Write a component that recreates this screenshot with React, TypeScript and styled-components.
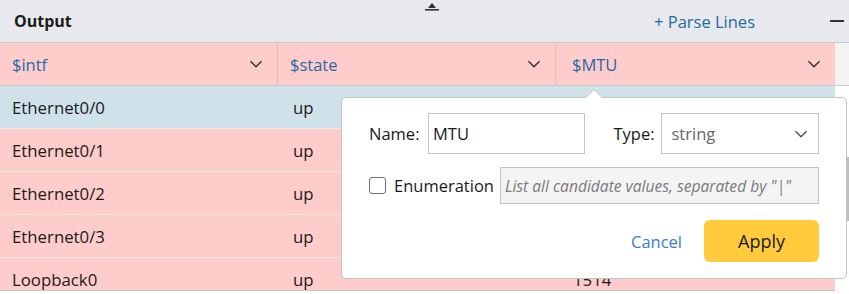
import React from "react";
import styled, { createGlobalStyle } from "styled-components";

const GlobalStyle = createGlobalStyle`
  html, body {
    margin: 0;
    padding: 0;
    background: #ffffff;
    font-family: "Open Sans", "Noto Sans", sans-serif;
  }
`;

const Panel = styled.div`
  width: 849px;
  height: 294px;
  overflow: hidden;
  position: relative;
  background: #ffffff;
`;

const TopBar = styled.div`
  height: 42px;
  display: flex;
  align-items: center;
  padding: 0 4px 0 14px;
  background: #e8e9ec;
  border-bottom: 1px solid #c9c9c9;
  position: relative;
`;

const Title = styled.div`
  font-weight: 700;
  font-size: 16px;
  color: #1b1b1b;
  flex: 1;
`;

const ParseLink = styled.span`
  font-size: 16.5px;
  color: #1f6aa5;
  margin-right: 75px;
`;

const Grip = styled.div`
  position: absolute;
  left: 423px;
  top: 2px;
  width: 18px;
  display: flex;
  flex-direction: column;
  align-items: center;
`;

const MinusIcon = styled.div`
  width: 14px;
  height: 2px;
  background: #333;
  margin-right: 1px;
`;

const TableArea = styled.div`
  display: flex;
  position: relative;
`;

const Table = styled.div`
  width: 835px;
`;

const Body = styled.div`
  height: 204px;
  overflow: hidden;
  border-bottom: 1px solid #c9c9c9;
`;

const Gutter = styled.div`
  flex: 1;
  background: #ffffff;
  display: flex;
  flex-direction: column;
`;

const GutterHead = styled.div`
  height: 42px;
  background: #f4f4f4;
  border-bottom: 1px solid #c9c9c9;
`;

const Row = styled.div<{ $bg: string; $head?: boolean }>`
  display: grid;
  grid-template-columns: 278px 278px 279px;
  height: 42px;
  flex-shrink: 0;
  background: ${({ $bg }) => $bg};
  border-bottom: 1px solid ${({ $head }) => ($head ? "#c9c9c9" : "#f3e8e8")};
`;

const HeadCell = styled.div`
  display: flex;
  align-items: center;
  justify-content: space-between;
  padding: 0 14px 0 12px;
  font-size: 16.5px;
  color: #1f6aa5;
  border-right: 1px solid #e4b9b9;
  &:last-child {
    border-right: none;
    padding-left: 16px;
  }
`;

const Cell = styled.div`
  display: flex;
  align-items: center;
  padding: 0 12px;
  font-size: 16.8px;
  color: #1a1a1a;
  &:nth-child(2) {
    padding-left: 15px;
  }
  &:nth-child(3) {
    padding-left: 17px;
  }
`;

const Popover = styled.div`
  position: absolute;
  left: 341px;
  top: 54px;
  width: 506px;
  height: 182px;
  box-sizing: border-box;
  background: #ffffff;
  border: 1px solid #c4c4c4;
  border-radius: 5px;
  padding: 15px 27px 0 27px;
  display: flex;
  flex-direction: column;
`;

const Arrow = styled.div`
  position: absolute;
  left: 243px;
  top: -9px;
  width: 0;
  height: 0;
  border-left: 9px solid transparent;
  border-right: 9px solid transparent;
  border-bottom: 9px solid #c4c4c4;
  &::after {
    content: "";
    position: absolute;
    left: -8px;
    top: 1px;
    border-left: 8px solid transparent;
    border-right: 8px solid transparent;
    border-bottom: 8px solid #ffffff;
  }
`;

const FormRow = styled.div<{ $gap?: number }>`
  display: flex;
  align-items: center;
  margin-bottom: ${({ $gap }) => $gap ?? 0}px;
`;

const Label = styled.span<{ $w?: number; $ml?: number }>`
  font-size: 16.5px;
  color: #1a1a1a;
  width: ${({ $w }) => ($w ? `${$w}px` : "auto")};
  margin-left: ${({ $ml }) => $ml ?? 0}px;
  flex-shrink: 0;
`;

const TextInput = styled.div`
  width: 158px;
  height: 41px;
  box-sizing: border-box;
  border: 1px solid #c4c4c4;
  display: flex;
  align-items: center;
  padding: 0 4px;
  font-size: 16.5px;
  color: #1a1a1a;
`;

const SelectBox = styled.div`
  width: 158px;
  height: 41px;
  box-sizing: border-box;
  border: 1px solid #c4c4c4;
  display: flex;
  align-items: center;
  justify-content: space-between;
  padding: 0 10px 0 9px;
  font-size: 16.5px;
  color: #666;
`;

const Checkbox = styled.div`
  width: 17px;
  height: 17px;
  box-sizing: border-box;
  border: 1.5px solid #6f6f6f;
  border-radius: 3px;
  margin-right: 8px;
  flex-shrink: 0;
`;

const EnumInput = styled.div`
  width: 320px;
  height: 37px;
  box-sizing: border-box;
  border: 1px solid #c4c4c4;
  background: #f4f4f4;
  display: flex;
  align-items: center;
  padding: 0 4px;
  font-size: 15.6px;
  font-style: italic;
  color: #7a7a7a;
  white-space: nowrap;
  overflow: hidden;
  margin-left: 6px;
`;

const Actions = styled.div`
  display: flex;
  justify-content: flex-end;
  align-items: center;
  gap: 22px;
  margin-top: 16px;
`;

const CancelButton = styled.span`
  font-size: 16.5px;
  color: #3a7cc0;
`;

const ApplyButton = styled.div`
  width: 115px;
  height: 42px;
  background: #ffcb3d;
  border-radius: 6px;
  display: flex;
  align-items: center;
  justify-content: center;
  font-size: 18px;
  color: #1a1a1a;
`;

const Thumb = styled.div`
  position: absolute;
  right: 0;
  top: 114px;
  width: 2px;
  height: 64px;
  background: #bdbdbd;
`;

const Chevron = ({ color = "#333" }: { color?: string }) => (
  <svg width="14" height="8" viewBox="0 0 14 8">
    <path d="M1.5 1.2l5.5 5.5 5.5-5.5" fill="none" stroke={color} strokeWidth="1.5" />
  </svg>
);

const rows = [
  { intf: "Ethernet0/0", state: "up", mtu: "1500" },
  { intf: "Ethernet0/1", state: "up", mtu: "1500" },
  { intf: "Ethernet0/2", state: "up", mtu: "1500" },
  { intf: "Ethernet0/3", state: "up", mtu: "1500" },
  { intf: "Loopback0", state: "up", mtu: "1514" },
];

export default function App() {
  return (
    <>
      <GlobalStyle />
      <Panel>
        <TopBar>
          <Title>Output</Title>
          <ParseLink>+ Parse Lines</ParseLink>
          <MinusIcon />
          <Grip>
            <svg width="18" height="10" viewBox="0 0 18 10">
              <path d="M5 6l4-5 4 5z" fill="#333" />
              <rect x="2" y="7" width="14" height="1.6" fill="#333" />
            </svg>
          </Grip>
        </TopBar>
        <TableArea>
          <Table>
            <Row $bg="#ffcccc" $head>
              {["$intf", "$state", "$MTU"].map((h) => (
                <HeadCell key={h}>
                  {h}
                  <Chevron />
                </HeadCell>
              ))}
            </Row>
            <Body>
              {rows.map((r, i) => (
                <Row key={r.intf} $bg={i === 0 ? "#cfe2ea" : "#ffcccc"}>
                  <Cell>{r.intf}</Cell>
                  <Cell>{r.state}</Cell>
                  <Cell>{r.mtu}</Cell>
                </Row>
              ))}
            </Body>
          </Table>
          <Gutter>
            <GutterHead />
          </Gutter>
          <Thumb />
          <Popover>
            <Arrow />
            <FormRow $gap={13}>
              <Label $w={59}>Name:</Label>
              <TextInput>MTU</TextInput>
              <Label $w={48} $ml={28}>
                Type:
              </Label>
              <SelectBox>
                string
                <Chevron color="#555" />
              </SelectBox>
            </FormRow>
            <FormRow>
              <Checkbox />
              <Label>Enumeration</Label>
              <EnumInput>List all candidate values, separated by "|"</EnumInput>
            </FormRow>
            <Actions>
              <CancelButton>Cancel</CancelButton>
              <ApplyButton>Apply</ApplyButton>
            </Actions>
          </Popover>
        </TableArea>
      </Panel>
    </>
  );
}
